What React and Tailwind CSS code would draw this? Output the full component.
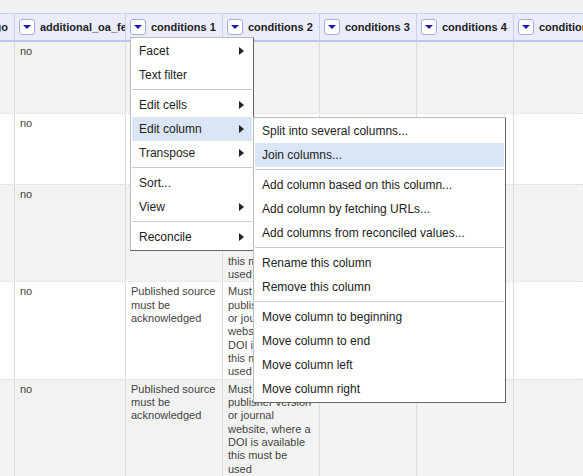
import React from "react";

const FONT = { fontFamily: '"Liberation Sans", Arial, sans-serif' };

const columns = [
  "additional_oa_fee",
  "conditions 1",
  "conditions 2",
  "conditions 3",
  "conditions 4",
  "conditions 5",
];

const ACK = "Published source must be acknowledged";
const DOI =
  "Must be publisher version or journal website, where a DOI is available this must be used";

// each row: values for columns after the leading partial one
const rows = [
  { cells: ["no", "", "", "", "", ""], minH: "min-h-[71px]" },
  { cells: ["no", "", "", "", "", ""], minH: "min-h-[71px]" },
  { cells: ["no", ACK, DOI, "", "", ""], minH: "" },
  { cells: ["no", ACK, DOI, "", "", ""], minH: "" },
  { cells: ["no", ACK, DOI, "", "", ""], minH: "" },
];

const gridCols = "grid grid-cols-[14px_111px_97px_97px_97px_97px_97px]";

const columnMenu = [
  { label: "Facet", sub: true },
  { label: "Text filter" },
  "sep",
  { label: "Edit cells", sub: true },
  { label: "Edit column", sub: true, active: true },
  { label: "Transpose", sub: true },
  "sep",
  { label: "Sort..." },
  { label: "View", sub: true },
  "sep",
  { label: "Reconcile", sub: true },
];

const editColumnMenu = [
  { label: "Split into several columns..." },
  { label: "Join columns...", active: true },
  "sep",
  { label: "Add column based on this column..." },
  { label: "Add column by fetching URLs..." },
  { label: "Add columns from reconciled values..." },
  "sep",
  { label: "Rename this column" },
  { label: "Remove this column" },
  "sep",
  { label: "Move column to beginning" },
  { label: "Move column to end" },
  { label: "Move column left" },
  { label: "Move column right" },
];

const DropButton = () => (
  <span className="flex items-center justify-center w-4 h-4 shrink-0 bg-white border border-[#9fafe3] rounded-[3px]">
    <span className="w-0 h-0 border-x-[4px] border-x-transparent border-t-[4px] border-t-[#1b1bb4]" />
  </span>
);

const Menu = ({ items, className }) => (
  <div
    className={`absolute bg-white border border-[#bbb] border-r-[#666] border-b-[#666] p-px ${className}`}
  >
    {items.map((item, i) =>
      item === "sep" ? (
        <div key={i} className="h-px mt-[2px] mb-[3px] bg-[#ccc]" />
      ) : (
        <div
          key={i}
          className={`flex items-center justify-between h-6 pl-[7px] pr-[8px] text-[12px] text-[#222] whitespace-nowrap ${
            item.active ? "bg-[#dae5f6]" : ""
          }`}
        >
          <span>{item.label}</span>
          {item.sub && (
            <span className="w-0 h-0 border-y-[4px] border-y-transparent border-l-[5px] border-l-[#222]" />
          )}
        </div>
      )
    )}
  </div>
);

export default function App() {
  return (
    <div
      className="relative w-[583px] h-[476px] overflow-hidden bg-[#f1f1f1]"
      style={FONT}
    >
      <div className="h-[13px]" />

      {/* header row */}
      <div
        className={`${gridCols} h-[29px] bg-[#eaedf9] border-t border-b-2 border-t-[#c7d1f1] border-b-[#bac8f0]`}
      >
        <div className="flex items-center justify-end overflow-hidden whitespace-nowrap pr-[6px] text-[11px] font-bold text-[#222]">
          go
        </div>
        {columns.map((name) => (
          <div
            key={name}
            className="flex items-center gap-[5px] pl-1 overflow-hidden whitespace-nowrap border-l border-[#c7d1f1] text-[11px] font-bold text-[#222]"
          >
            <DropButton />
            <span>{name}</span>
          </div>
        ))}
      </div>

      {/* body rows */}
      {rows.map((row, r) => (
        <div
          key={r}
          className={`${gridCols} ${row.minH} ${
            r % 2 === 0 ? "bg-[#f2f2f2]" : "bg-white"
          } ${r > 0 ? "border-t border-dotted border-[#d6d6d6]" : ""}`}
        >
          <div />
          {row.cells.map((val, c) => (
            <div
              key={c}
              className={`border-l border-[#dcdcdc] px-[5px] pt-[3px] ${
                r === 0 ? "pb-px" : "pb-0"
              } text-[11px] leading-[13.33px] text-[#444]`}
            >
              {val}
            </div>
          ))}
        </div>
      ))}

      <Menu items={columnMenu} className="left-[130px] top-[37px] w-[124px]" />
      <Menu items={editColumnMenu} className="left-[253px] top-[117px] w-[253px]" />
    </div>
  );
}
